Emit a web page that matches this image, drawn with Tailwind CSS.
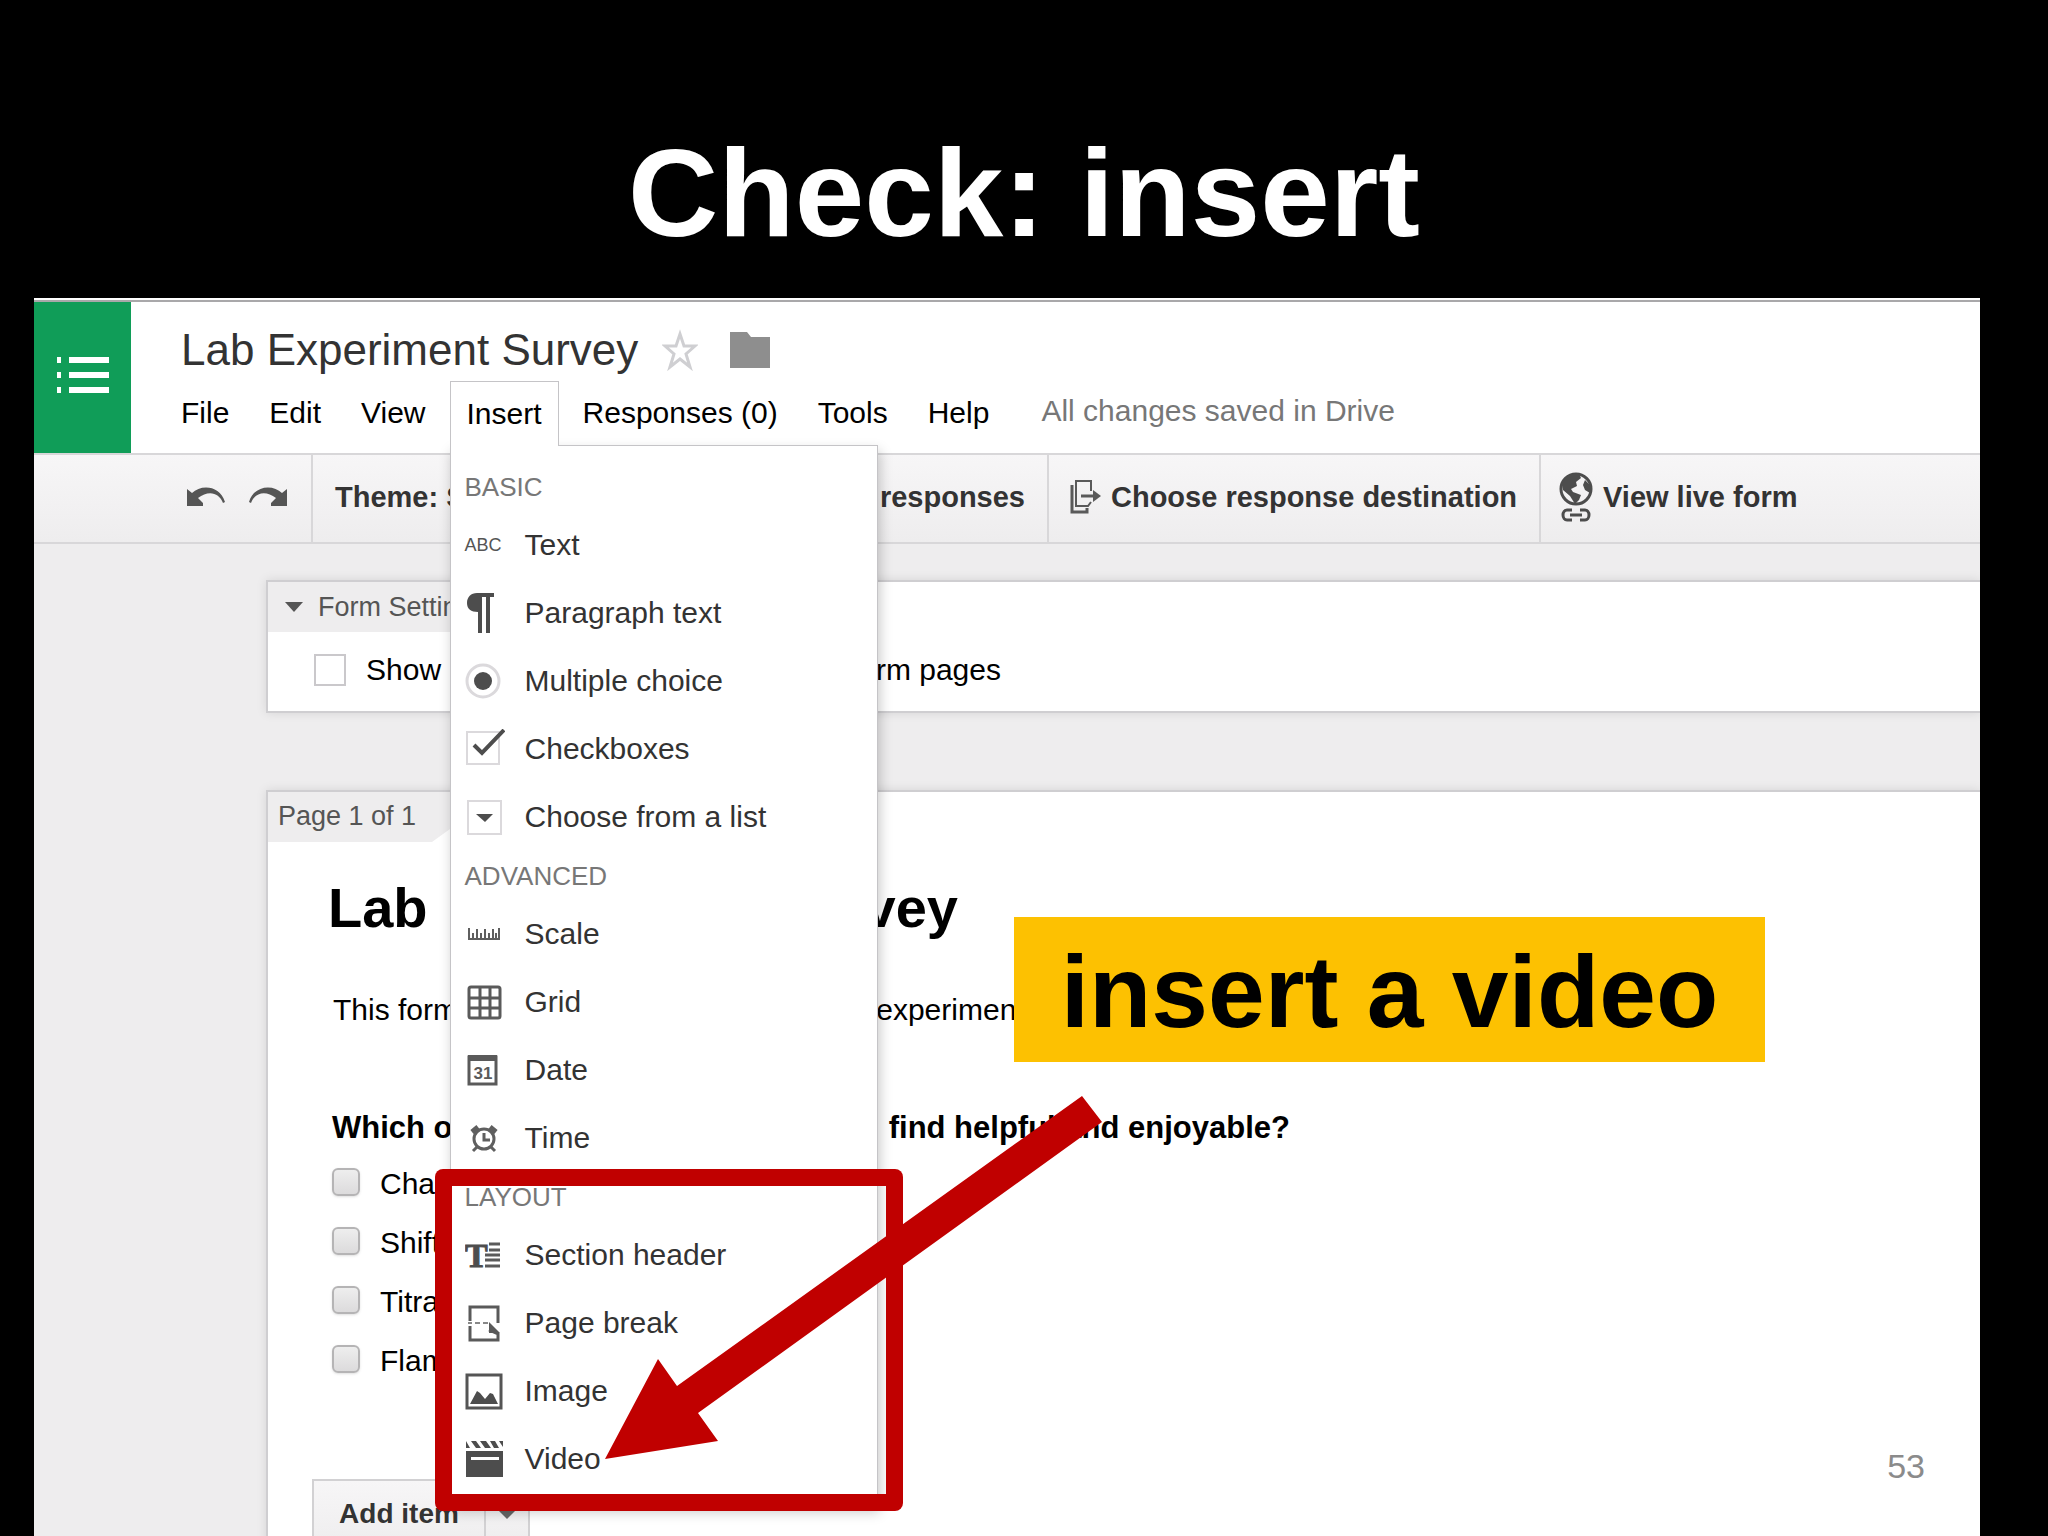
<!DOCTYPE html>
<html lang="en">
<head>
<meta charset="utf-8">
<title>Check: insert</title>
<script src="https://cdn.jsdelivr.net/npm/@tailwindcss/browser@4"></script>
</head>
<body class="bg-black">
<main class="relative flex h-screen flex-col overflow-hidden bg-black font-['Liberation_Sans',Arial,sans-serif] text-[30px] leading-10 text-black">
  <h1 class="pt-[123px] pb-[35px] text-center text-[125px] leading-[140px] font-bold text-white">Check: insert</h1>

  <section class="relative mr-[68px] ml-[34px] flex min-h-0 flex-1 flex-col border-t-2 border-white bg-[#eeedee]">
    <!-- Document header -->
    <header class="flex h-[153px] shrink-0 border-t-2 border-[#a9a8aa] bg-white">
      <a href="#" aria-label="Forms home" class="flex w-[97px] shrink-0 items-center justify-center bg-[#109d58] pb-1">
        <svg class="h-10 w-[52px]" viewBox="0 0 52 40" fill="#fff"><path d="M0 1h4v6H0zM12 1h40v6H12zM0 16h4v6H0zM12 16h40v6H12zM0 31h4v6H0zM12 31h40v6H12z"/></svg>
      </a>
      <div class="min-w-0 flex-1 pt-[22px] pl-[34px]">
        <div class="flex items-center pl-4">
          <h2 class="text-[44px] leading-[52px] text-[#333]">Lab Experiment Survey</h2>
          <button aria-label="Star" class="ml-6"><svg class="h-[42px] w-9" viewBox="0 0 36 42" fill="none" stroke="#cfcfd2" stroke-width="3"><path d="M18 5l4 12h11l-9 8 4 13-10-8-10 8 4-13-9-8h11z"/></svg></button>
          <button aria-label="Move to folder" class="ml-8"><svg class="h-9 w-10" viewBox="0 0 40 36" fill="#8e8e8e"><path d="M0 0h17l4 5h19v31H0z"/></svg></button>
        </div>
        <nav class="mt-[5px] flex items-start gap-2 whitespace-nowrap">
          <button class="h-16 px-4">File</button>
          <button class="h-16 px-4">Edit</button>
          <button class="h-16 px-4">View</button>
          <div class="relative">
            <button aria-expanded="true" class="relative z-20 h-[65px] border border-b-0 border-[#c5c4c7] bg-white px-4">Insert</button>
            <!-- Insert menu -->
            <div class="absolute top-16 left-0 z-10 w-[428px] border border-[#c5c4c7] bg-white pt-4 pb-3 text-[#333] shadow-[2px_6px_12px_rgba(0,0,0,0.22)]">
              <h3 class="flex h-[49px] items-center pl-[14px] text-[26px] text-[#777]">BASIC</h3>
              <button class="flex h-[68px] w-full items-center pl-[14px]"><span class="flex w-[60px] text-[18px] text-[#555]">ABC</span>Text</button>
              <button class="flex h-[68px] w-full items-center pl-[14px]"><span class="w-[60px]"><svg class="h-10 w-10" viewBox="0 0 40 40" fill="#4d4d4d"><path d="M12 0h17v4h-4v36h-4V4h-4v36h-4V19C6 19 2 16 2 10S6 0 12 0z"/></svg></span>Paragraph text</button>
              <button class="flex h-[68px] w-full items-center pl-[14px]"><span class="w-[60px]"><svg class="h-10 w-10" viewBox="0 0 40 40"><circle cx="18" cy="20" r="16" fill="#fff" stroke="#dbd9dc" stroke-width="3"/><circle cx="18" cy="20" r="9" fill="#4d4d4d"/></svg></span>Multiple choice</button>
              <button class="flex h-[68px] w-full items-center pl-[14px]"><span class="w-[60px]"><svg class="h-10 w-10" viewBox="0 0 40 40" fill="none"><rect x="2" y="3" width="32" height="32" stroke="#dbd9dc" stroke-width="2"/><path d="M9 16l8 8L39 1" stroke="#4d4d4d" stroke-width="4"/></svg></span>Checkboxes</button>
              <button class="flex h-[68px] w-full items-center pl-[14px]"><span class="w-[60px]"><svg class="h-10 w-10" viewBox="0 0 40 40"><rect x="3" y="4" width="33" height="33" fill="#fff" stroke="#dbd9dc" stroke-width="2"/><path d="M11 17h17l-8 8z" fill="#4d4d4d"/></svg></span>Choose from a list</button>
              <h3 class="flex h-[49px] items-center pl-[14px] text-[26px] text-[#777]">ADVANCED</h3>
              <button class="flex h-[68px] w-full items-center pl-[14px]"><span class="w-[60px]"><svg class="h-10 w-10" viewBox="0 0 40 40" fill="none" stroke="#5f5f5f" stroke-width="2"><path d="M3 25h32M4 14v11M8 19v6M12 15v10M16 19v6M20 15v10M24 19v6M28 15v10M31 19v6M34 14v11"/></svg></span>Scale</button>
              <button class="flex h-[68px] w-full items-center pl-[14px]"><span class="w-[60px]"><svg class="h-10 w-10" viewBox="0 0 40 40" fill="none" stroke="#5a5a5a" stroke-width="3"><rect x="4" y="5" width="31" height="31" rx="2"/><path d="M15 5v31M25 5v31M4 16h31M4 26h31"/></svg></span>Grid</button>
              <button class="flex h-[68px] w-full items-center pl-[14px]"><span class="w-[60px]"><svg class="h-10 w-10" viewBox="0 0 40 40"><rect x="4" y="7" width="27" height="27" fill="#fff" stroke="#5a5a5a" stroke-width="3"/><path d="M3 5h29v6H3z" fill="#5a5a5a"/><text x="18" y="29" text-anchor="middle" font-size="17" font-weight="bold" fill="#5a5a5a">31</text></svg></span>Date</button>
              <button class="flex h-[68px] w-full items-center pl-[14px]"><span class="w-[60px]"><svg class="h-10 w-10" viewBox="0 0 40 40" fill="none" stroke="#5f5f5f" stroke-width="3"><circle cx="19" cy="21" r="10"/><path d="M19 15v7h6M12 29l-4 4M26 29l4 4"/><path d="M7 14l6-5M25 9l6 5" stroke-width="5"/></svg></span>Time</button>
              <h3 class="flex h-[49px] items-center pl-[14px] text-[26px] text-[#777]">LAYOUT</h3>
              <button class="flex h-[68px] w-full items-center pl-[14px]"><span class="w-[60px]"><svg class="h-10 w-10" viewBox="0 0 40 40"><text x="0" y="32" font-family="Liberation Serif, serif" font-size="34" font-weight="bold" fill="#4d4d4d" stroke="#4d4d4d">T</text><path d="M24 9h11M24 15h11M20 20h15M20 25h15M20 31h15" stroke="#5a5a5a" stroke-width="3"/></svg></span>Section header</button>
              <button class="flex h-[68px] w-full items-center pl-[14px]"><span class="w-[60px]"><svg class="h-10 w-10" viewBox="0 0 40 40" fill="none" stroke="#5a5a5a" stroke-width="3"><path d="M5 18V4h28v16M5 23v14h28v-6l-9-4"/><path d="M3 20h4m3 0h5m3 0h5" stroke="#888" stroke-width="2"/><path d="M24 19l11 11H24z" fill="#5a5a5a" stroke="none"/></svg></span>Page break</button>
              <button class="flex h-[68px] w-full items-center pl-[14px]"><span class="w-[60px]"><svg class="h-10 w-10" viewBox="0 0 40 40"><rect x="2" y="4" width="34" height="33" fill="#fff" stroke="#555" stroke-width="3"/><path d="M5 33l7-13 3 2 5 6 5-6 3 1 5 10z" fill="#4d4d4d"/></svg></span>Image</button>
              <button class="flex h-[68px] w-full items-center pl-[14px]"><span class="w-[60px]"><svg class="h-10 w-10" viewBox="0 0 40 40" fill="#4d4d4d"><path d="M1 2l4 7H1zM6 2h5l5 7h-5zM15 2h6l5 7h-6zM25 2h5l4 7h-5zM34 2h4v6zM1 12h37v26H1z"/><path d="M6 18h28v3H6z" fill="#fff"/></svg></span>Video</button>
            </div>
          </div>
          <button class="h-16 px-4">Responses (0)</button>
          <button class="h-16 px-4">Tools</button>
          <button class="h-16 px-4">Help</button>
          <p class="flex h-16 items-center pb-1 pl-7 text-[#777]">All changes saved in Drive</p>
        </nav>
      </div>
    </header>

    <!-- Toolbar -->
    <div class="flex h-[91px] shrink-0 border-y-2 border-[#d8d7d9] bg-linear-to-b from-[#f7f6f7] to-[#eeedee] text-[29px] font-bold whitespace-nowrap text-[#333]">
      <div class="flex w-[279px] shrink-0 items-center justify-end gap-6 border-r-2 border-[#d8d7d9] pr-6 pb-1">
        <button aria-label="Undo"><svg class="h-5 w-[38px]" viewBox="0 0 38 20" fill="#555"><path d="M0 2l5 4C14-3 33-2 38 15l-2 1C32 5 21 3 11 11l5 5v3H0z"/></svg></button>
        <button aria-label="Redo"><svg class="h-5 w-[38px]" viewBox="0 0 38 20" fill="#555"><path d="M38 2l-5 4C24-3 5-2 0 15l2 1C6 5 17 3 27 11l-5 5v3h16z"/></svg></button>
      </div>
      <div class="flex w-[736px] shrink-0 items-center justify-between border-r-2 border-[#d8d7d9] px-[22px] pb-1">
        <button>Theme: Simple</button>
        <button>Accepting responses</button>
      </div>
      <button class="flex w-[492px] shrink-0 items-center gap-[10px] border-r-2 border-[#d8d7d9] pb-1 pl-5"><svg class="h-9 w-8" viewBox="0 0 32 36" fill="none" stroke="#5a5a5a" stroke-width="2"><path d="M22 12V2H7v25h12l3-4"/><path d="M3 6v27h15v-4" stroke-width="3"/><path d="M12 17h14" stroke-width="3"/><path d="M24 11l8 6-8 6z" fill="#5a5a5a" stroke="none"/></svg>Choose response destination</button>
      <button class="flex items-center gap-[10px] pb-1 pl-[18px]"><svg class="h-[52px] w-[34px]" viewBox="0 0 34 52" fill="none" stroke="#4d4d4d"><circle cx="17" cy="18" r="15" stroke-width="3"/><path d="M3 12C7 3 15 2 20 3l2 4-5 4 1 4-6 3 2 3 8 3-2 5-4 4-5-8-7-6zM26 9l5 5v8l-5-3-2-5z" fill="#4d4d4d" stroke="none"/><path d="M13 39H8a4 5 0 0 0 0 10h5M21 39h5a4 5 0 0 1 0 10h-5M11 44h12" stroke-width="3"/></svg>View live form</button>
    </div>

    <!-- Form editor -->
    <div class="flex min-h-0 flex-1 flex-col gap-[77px] overflow-hidden pt-9 pl-[232px]">
      <section class="h-[133px] shrink-0 border-2 border-r-0 border-[#cfced1] bg-white shadow-[0_0_10px_rgba(0,0,0,0.1)]">
        <button class="flex h-[50px] w-64 items-center gap-[14px] bg-[#eeedee] pl-4 text-[27px] text-[#555]"><svg class="h-3 w-5" viewBox="0 0 20 12" fill="#555"><path d="M1 1h18l-9 10z"/></svg>Form Settings</button>
        <label class="flex items-center gap-5 pt-[18px] pl-[46px]">
          <input type="checkbox" class="size-8 appearance-none border-2 border-[#cac8cb] bg-white">
          <span class="flex w-[635px] justify-between whitespace-nowrap"><span>Show progress bar</span><span>on all form pages</span></span>
        </label>
      </section>

      <section class="flex-1 border-2 border-r-0 border-b-0 border-[#cfced1] bg-white shadow-[0_0_10px_rgba(0,0,0,0.1)]">
        <p class="h-[50px] w-[200px] bg-[#eeedee] pt-1 pl-[10px] text-[27px] text-[#555] [clip-path:polygon(0_0,100%_0,100%_24px,82%_100%,0_100%)]">Page 1 of 1</p>
        <div class="pl-[60px]">
          <h2 class="flex w-[630px] justify-between pt-[30px] text-[56px] leading-[72px] font-bold whitespace-nowrap"><span>Lab</span><span>Experiment Survey</span></h2>
          <p class="flex w-[720px] justify-between pt-[46px] pl-[5px] whitespace-nowrap"><span>This form is about your lab</span><span>experiments.</span></p>
          <fieldset class="pt-[78px]">
            <legend class="float-left flex w-[962px] justify-between pl-1 text-[31px] font-bold whitespace-nowrap"><span>Which of the labs did you</span><span>find helpful and enjoyable?</span></legend>
            <div class="clear-both flex flex-col gap-[19px] pt-4 pl-1">
              <label class="flex items-center gap-5"><input type="checkbox" class="mb-1 size-7 appearance-none rounded-md border-2 border-[#b5b4b5] bg-linear-to-b from-[#eee] to-[#dcdbdc] shadow-sm">Charles's Law</label>
              <label class="flex items-center gap-5"><input type="checkbox" class="mb-1 size-7 appearance-none rounded-md border-2 border-[#b5b4b5] bg-linear-to-b from-[#eee] to-[#dcdbdc] shadow-sm">Shifting Equilibrium</label>
              <label class="flex items-center gap-5"><input type="checkbox" class="mb-1 size-7 appearance-none rounded-md border-2 border-[#b5b4b5] bg-linear-to-b from-[#eee] to-[#dcdbdc] shadow-sm">Titration</label>
              <label class="flex items-center gap-5"><input type="checkbox" class="mb-1 size-7 appearance-none rounded-md border-2 border-[#b5b4b5] bg-linear-to-b from-[#eee] to-[#dcdbdc] shadow-sm">Flame Test</label>
            </div>
          </fieldset>
        </div>
        <div class="mt-[98px] ml-11 flex h-[70px] w-[218px] border-2 border-[#d2d1d3] bg-linear-to-b from-[#f7f6f7] to-[#eeedee] text-[28px] font-bold text-[#333]">
          <button class="flex-1 border-r-2 border-[#d2d1d3]">Add item</button>
          <button aria-label="More item types" class="flex w-[42px] items-center justify-center"><svg class="h-3 w-5" viewBox="0 0 20 12" fill="#666"><path d="M0 1h20L10 11z"/></svg></button>
        </div>
      </section>
    </div>

    <!-- Annotations over the form -->
    <div class="absolute top-[869px] left-[401px] z-30 h-[342px] w-[468px] rounded-lg bg-[#c00000] [clip-path:polygon(evenodd,0_0,468px_0,468px_342px,0_342px,0_0,17px_17px,451px_17px,451px_325px,17px_325px,17px_17px)]"></div>
    <svg class="absolute top-[796px] left-[571px] z-30 h-[364px] w-[498px]" viewBox="0 0 498 364" fill="#c00000" aria-hidden="true"><path d="M0 363l53-100 19 27L477 0l20 26L93 317l20 28z"/></svg>
    <p class="absolute top-[617px] left-[980px] z-30 flex h-[145px] w-[751px] items-center justify-center bg-[#fdc101] pt-1 text-[102px] leading-[120px] font-bold whitespace-nowrap">insert a video</p>
    <p class="absolute right-[55px] bottom-[50px] text-[34px] text-[#8b8b8b]">53</p>
  </section>
</main>
</body>
</html>
